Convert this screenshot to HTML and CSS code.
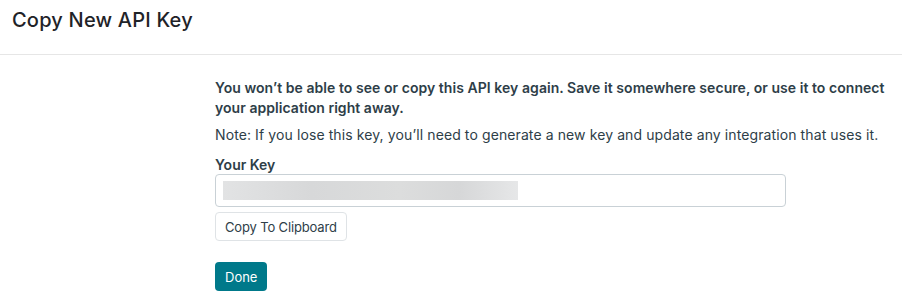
FILE: index.html
```html
<!DOCTYPE html>
<html>
<head>
<meta charset="utf-8">
<link rel="stylesheet" href="styles.css">
</head>
<body>
<div class="header">
  <h1 class="title">Copy New API Key</h1>
</div>
<div class="content">
  <p class="warning">You won’t be able to see or copy this API key again. Save it somewhere secure, or use it to connect your application right away.</p>
  <p class="note">Note: If you lose this key, you’ll need to generate a new key and update any integration that uses it.</p>
  <label class="label">Your Key</label>
  <div class="key-input"><div class="key-mask"></div></div>
  <button class="btn-copy">Copy To Clipboard</button>
  <button class="btn-done">Done</button>
</div>
</body>
</html>
```
FILE: styles.css
```css
* { box-sizing: border-box; }
body {
  margin: 0;
  font-family: "Inter", "Noto Sans", sans-serif;
  color: #2e3e48;
  background: #fff;
}
.header {
  height: 55px;
  border-bottom: 1px solid #e6e6e6;
  padding: 6px 12px 0;
}
.title {
  margin: 0;
  font-size: 20px;
  line-height: 28px;
  font-weight: 500;
  letter-spacing: 0.2px;
  color: #1f2328;
}
.content {
  margin-left: 215px;
  width: 680px;
  padding-top: 23px;
  display: flex;
  flex-direction: column;
  align-items: flex-start;
}
.warning {
  margin: 0;
  font-size: 14px;
  line-height: 20px;
  font-weight: 600;
  letter-spacing: 0.05px;
}
.note {
  margin: 7px 0 0;
  font-size: 14px;
  line-height: 19px;
  letter-spacing: 0.1px;
}
.label {
  margin-top: 11px;
  font-size: 14px;
  line-height: 19px;
  font-weight: 600;
}
.key-input {
  margin-top: 0;
  width: 571px;
  height: 33px;
  border: 1px solid #c9d1d6;
  border-radius: 4px;
  padding: 6px 7px;
}
.key-mask {
  width: 295px;
  height: 19px;
  background: linear-gradient(90deg, #e2e3e4 0%, #d7d8d9 30%, #dcdddd 60%, #d6d7d8 80%, #e6e7e8 100%);
}
.btn-copy {
  margin-top: 5px;
  height: 29px;
  padding: 0 9px;
  font-family: inherit;
  font-size: 13px;
  letter-spacing: -0.15px;
  color: #2e3e48;
  background: #fff;
  border: 1px solid #dfe3e6;
  border-radius: 4px;
}
.btn-done {
  margin-top: 21px;
  height: 29px;
  padding: 0 10px;
  font-family: inherit;
  font-size: 13px;
  color: #fff;
  background: #00798a;
  border: none;
  border-radius: 4px;
}
```
